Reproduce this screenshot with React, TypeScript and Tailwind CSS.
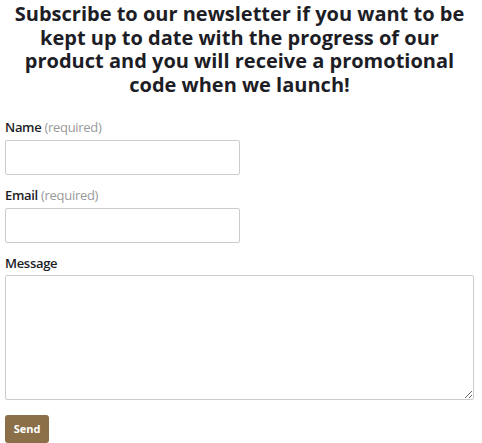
export default function App() {
  return (
    <div className="w-[482px] h-[443px] overflow-hidden bg-white pl-[5px] pr-[8px] pt-[2px] font-['Open_Sans',sans-serif] text-[#1d1d26]">
      <h2 className="text-center text-[20px] leading-[23.5px] font-bold">
        Subscribe to our newsletter if you want to be kept up to date with the progress of our product and you will receive a promotional code when we launch!
      </h2>
      <form className="mt-[24px] flex flex-col" onSubmit={(e) => e.preventDefault()}>
        <label className="text-[13px] leading-[14px] font-semibold tracking-[-0.3px]">
          Name <span className="font-normal text-[#9a9a9a]">(required)</span>
        </label>
        <input type="text" className="mt-[6px] h-[35px] w-[235px] rounded-[2px] border border-[#cccccc] px-2 outline-none" />

        <label className="mt-[13px] text-[13px] leading-[14px] font-semibold tracking-[-0.3px]">
          Email <span className="font-normal text-[#9a9a9a]">(required)</span>
        </label>
        <input type="email" className="mt-[6px] h-[35px] w-[235px] rounded-[2px] border border-[#cccccc] px-2 outline-none" />

        <label className="mt-[13px] text-[13px] leading-[14px] font-semibold tracking-[-0.3px]">Message</label>
        <textarea className="mt-[5px] h-[125px] w-[469px] rounded-[2px] border border-[#cccccc] p-2 outline-none" />

        <div className="mt-[15px]">
          <button type="submit" className="h-[28px] w-[44px] rounded-[3px] bg-[#8a6f48] text-[11px] font-bold text-white">
            Send
          </button>
        </div>
      </form>
    </div>
  );
}
